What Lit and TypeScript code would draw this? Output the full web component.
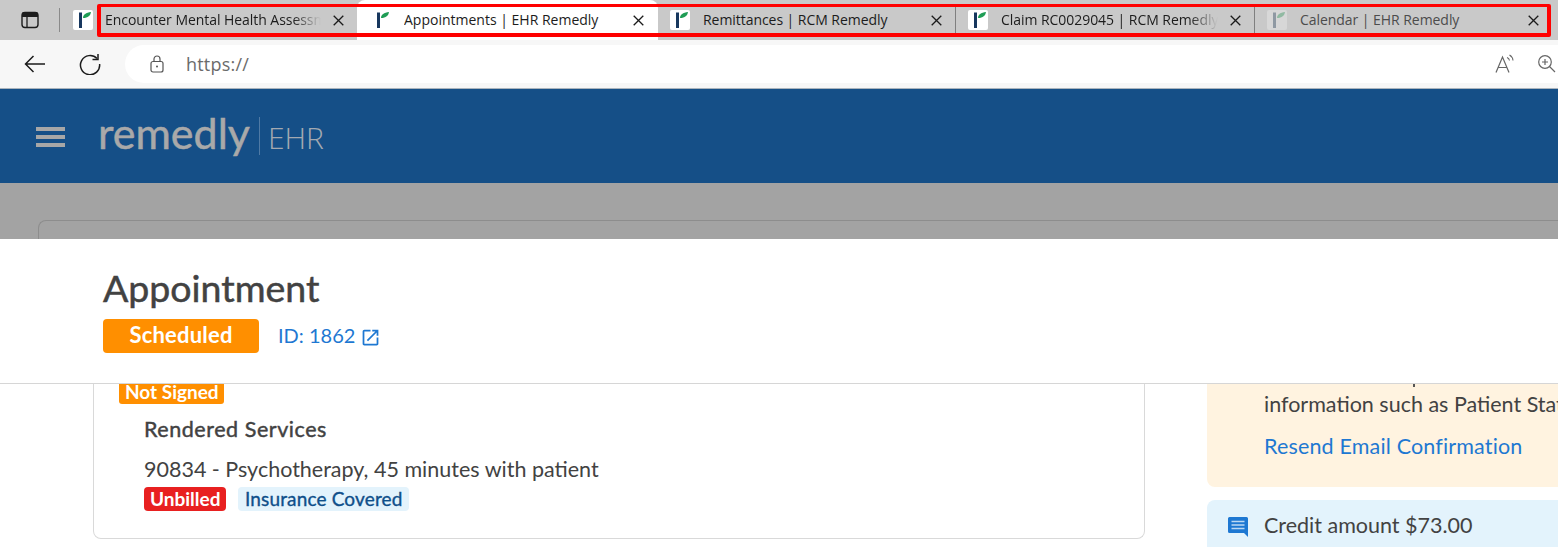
import { LitElement, html, css, svg } from "lit";
import { customElement } from "lit/decorators.js";

const fav = (dim = false) => html`<span class="fav ${dim ? "dim" : ""}"><svg width="20" height="20" viewBox="0 0 20 20">
  <rect x="6" y="2.5" width="3" height="15.5" fill="#17375e"/>
  <path d="M10 8C10 4.5 13 2.6 18 2C17.5 5.5 15 8 10 8Z" fill="#1f9d55"/>
</svg></span>`;

const closeIcon = svg`<path d="M.7 .7L10.3 10.3M10.3 .7L.7 10.3" stroke="#1a1a1a" stroke-width="1.3" fill="none"/>`;

interface Tab { title: string; active?: boolean; dim?: boolean; fade?: boolean; width: number; sep?: boolean }

const tabs: Tab[] = [
  { title: "Encounter Mental Health Assessment", fade: true, width: 252 },
  { title: "Appointments | EHR Remedly", active: true, width: 301 },
  { title: "Remittances | RCM Remedly", width: 298, sep: true },
  { title: "Claim RC0029045 | RCM Remedly", fade: true, width: 299, sep: true },
  { title: "Calendar | EHR Remedly", dim: true, width: 297 },
];

@customElement("app-root")
export class AppRoot extends LitElement {
  static styles = css`
    :host { display: block; width: 1558px; height: 547px; overflow: hidden; position: relative; background: #fff; font-family: "Lato", "Open Sans", sans-serif; color: #424242; }
    .strip { height: 40px; background: #c9c9c9; display: flex; align-items: center; box-sizing: border-box; font-family: "Open Sans", sans-serif; }
    .winbtn { width: 59px; box-sizing: border-box; padding-left: 21px; display: flex; align-items: center; height: 100%; }
    .vsep { width: 1px; height: 24px; background: #8a8a8a; margin-right: 13px; }
    .fav { width: 20px; height: 20px; background: #fff; border-radius: 2px; display: inline-flex; flex: none; }
    .fav.dim { background: #dcdcdc; opacity: .75; }
    .fav.dim path { fill: #7fb596; } .fav.dim rect { fill: #7c8a97; }
    .tab0fav { margin-right: 12px; display: inline-flex; }
    .tab { height: 40px; box-sizing: border-box; display: flex; align-items: center; flex: none; position: relative; font-size: 14px; letter-spacing: -.05px; color: #1c1c1c; }
    .tab.first { background: #c9c9c9; }
    .tab.active { background: #fff; padding-left: 14px; border-radius: 8px 8px 0 0; letter-spacing: 0; }
    .tab.active .x { margin-right: 14.5px; }
    .tab.norm { padding-left: 12px; }
    .tab.sep { border-right: 1px solid #7f7f7f; height: 28px; }
    .title { flex: 1; min-width: 0; white-space: nowrap; overflow: hidden; margin: -2px 0 0 13px; }
    .first .title { margin-left: 0; }
    .fade .title { -webkit-mask-image: linear-gradient(to right, #000 86%, transparent 99%); mask-image: linear-gradient(to right, #000 86%, transparent 99%); }
    .tab.dimmed .title { color: #4c4c4c; }
    .x { flex: none; width: 11px; height: 11px; margin: 0 13px 0 10px; }
    .redbox { position: absolute; left: 97px; top: 4px; width: 1454px; height: 33px; box-sizing: border-box; border: 4px solid #f00; border-top-width: 3px; border-radius: 2px; pointer-events: none; }
    .bar { height: 48px; background: #f7f7f7; display: flex; align-items: center; padding-left: 24px; box-sizing: border-box; }
    .navicon { flex: none; display: block; }
    .reload { margin-left: 33px; }
    .pill { margin-left: 24px; flex: 1; height: 38px; background: #fff; border-radius: 19px 0 0 19px; display: flex; align-items: center; padding-left: 25px; position: relative; }
    .url { margin-left: 22px; font-family: "Open Sans", sans-serif; font-size: 18px; color: #6b6b6b; letter-spacing: .2px; }
    .tools { margin-left: auto; display: flex; align-items: center; gap: 21px; margin-right: -1px; width: 64px; overflow: hidden; flex: none; }
    .zoomicon { flex: none; margin-left: 1px; }
    .head { height: 95px; background: #154f87; border-top: 1px solid #aab4bd; box-sizing: border-box; display: flex; align-items: center; padding-left: 36px; }
    .burger { width: 29px; height: 20px; display: flex; flex-direction: column; justify-content: space-between; margin-top: 1px; }
    .burger i { display: block; height: 4px; background: #a7a7a7; }
    .logo { margin-left: 33px; font-family: "Lato", sans-serif; font-size: 43px; color: #a9a9a9; -webkit-text-stroke: .5px #a9a9a9; line-height: 1; margin-top: -7px; }
    .divider { width: 1px; height: 38px; background: #4f7aa5; margin-left: 9px; margin-right: 8px; }
    .ehr { font-family: "Open Sans", sans-serif; font-weight: 300; font-size: 30px; color: #a3a9b1; margin-top: 3px; }
    .dimband { height: 56px; background: #a3a3a3; box-sizing: border-box; padding: 37px 0 0 38px; }
    .dimcard { height: 19px; border: 1px solid #8d8d8d; border-bottom: 0; border-right: 0; border-radius: 8px 0 0 0; }
    .modal { height: 145px; box-sizing: border-box; background: #fff; border-bottom: 1px solid #d6d6d6; padding: 27px 0 0 103px; }
    h1 { margin: 0; font-size: 37.5px; line-height: 44px; font-weight: 400; -webkit-text-stroke: .5px #424242; color: #424242; }
    .mrow { display: flex; align-items: center; margin-top: 9px; }
    .status { width: 156px; height: 34px; box-sizing: border-box; padding-bottom: 4px; background: #ff8f00; color: #fff; border-radius: 4px; font-size: 22px; letter-spacing: .2px; font-weight: 700; display: flex; align-items: center; justify-content: center; }
    .idlink { margin-left: 19px; color: #1e78d2; font-size: 20px; display: flex; align-items: center; gap: 5px; padding-bottom: 2px; }
    .idlink svg { margin-top: 4px; }
    .content { height: 163px; overflow: hidden; display: grid; grid-template-columns: 1052px 351px; column-gap: 62px; padding-left: 93px; }
    .card { height: 155px; box-sizing: border-box; border: 1px solid #d9d9d9; border-top: 0; border-radius: 0 0 8px 8px; padding-left: 25px; }
    .badge { display: inline-flex; align-items: center; border-radius: 4px; color: #fff; font-weight: 700; font-size: 19px; height: 24px; padding: 0 5.5px 2px 6px; box-sizing: border-box; }
    .notsigned { background: #ff8f00; margin-top: -4px; border-radius: 0 0 3px 3px; display: flex; width: fit-content; }
    h3 { margin: 12px 0 0 25px; font-size: 21.5px; line-height: 26px; font-weight: 400; -webkit-text-stroke: .45px #424242; letter-spacing: .55px; color: #424242; }
    .svc { margin: 14px 0 0 25px; font-size: 21.5px; line-height: 26px; }
    .tags { margin: 5px 0 0 25px; display: flex; gap: 12px; }
    .unb { background: #e82020; }
    .cov { background: #e3f3fc; color: #0f4f8a; font-weight: 400; -webkit-text-stroke: .35px #0f4f8a; letter-spacing: .15px; padding: 0 6px 2px 7px; }
    .side { display: flex; flex-direction: column; gap: 13px; min-width: 0; }
    .warn { height: 103px; box-sizing: border-box; background: #fff3e0; border-radius: 0 0 0 8px; padding: 0 0 0 57px; font-size: 21.5px; line-height: 26px; white-space: nowrap; overflow: hidden; }
    .tail { display: block; width: 2px; height: 3px; background: #555; margin: 0 0 4px 149px; }
    .warn a { display: block; margin-top: 16px; color: #1e78d2; letter-spacing: .16px; }
    .credit { height: 60px; box-sizing: border-box; background: #e3f3fc; border-radius: 8px 0 0 0; display: flex; align-items: flex-start; padding: 13px 0 0 20px; font-size: 21.5px; line-height: 24px; gap: 15px; }
    .credit svg { margin-top: 3px; flex: none; }
  `;

  private renderTab(t: Tab, i: number) {
    const cls = ["tab", i === 0 ? "first" : t.active ? "active" : "norm", t.sep ? "sep" : "", t.fade ? "fade" : "", t.dim ? "dimmed" : ""].join(" ");
    return html`<div class=${cls} style="width:${t.width}px">
      ${i === 0 ? "" : fav(t.dim)}
      <span class="title">${t.title}</span>
      <svg class="x" viewBox="0 0 11 11">${closeIcon}</svg>
    </div>`;
  }

  render() {
    return html`
      <div class="strip">
        <div class="winbtn">
          <svg width="18" height="18" viewBox="0 0 18 18"><rect x="1" y="1.5" width="16" height="15" rx="3" fill="none" stroke="#1c1c1c" stroke-width="1.4"/><path d="M1 2.5a1.5 1.5 0 0 1 1.5-1.5h13a1.5 1.5 0 0 1 1.5 1.5V6H1Z" fill="#1c1c1c"/><path d="M6 6v10" stroke="#1c1c1c" stroke-width="1.3"/></svg>
        </div>
        <div class="vsep"></div>
        <span class="tab0fav">${fav()}</span>
        ${tabs.map((t, i) => this.renderTab(t, i))}
      </div>
      <div class="bar">
        <svg class="navicon" width="22" height="18" viewBox="0 0 22 18"><path d="M21 9H1.5M9.5 1L1.5 9L9.5 17" stroke="#1c1c1c" stroke-width="1.5" fill="none"/></svg>
        <svg class="navicon reload" width="22" height="22" viewBox="0 0 22 22"><path d="M18 5.5A9.6 9.6 0 1 0 20.6 11" stroke="#1c1c1c" stroke-width="1.5" fill="none"/><path d="M19 1V6.5H13.5" stroke="#1c1c1c" stroke-width="1.5" fill="none"/></svg>
        <div class="pill">
          <svg width="14" height="18" viewBox="0 0 14 18"><rect x="1" y="6.5" width="12" height="10.5" rx="2" fill="none" stroke="#555" stroke-width="1.2"/><path d="M4 6.5V4a3 3 0 0 1 6 0v2.5" fill="none" stroke="#555" stroke-width="1.2"/><circle cx="7" cy="11.5" r="1" fill="#555"/></svg>
          <span class="url">https://</span>
          <div class="tools">
            <svg width="20" height="20" viewBox="0 0 20 20"><path d="M1 18.5L7.5 3L14 18.5M3.2 13.5H11.8" stroke="#666" stroke-width="1.2" fill="none"/><path d="M12 3.5a4 4 0 0 1 2.5 3M14.5 1a7 7 0 0 1 3.5 5.5" stroke="#666" stroke-width="1.1" fill="none"/></svg>
            <svg class="zoomicon" width="20" height="20" viewBox="0 0 20 20"><circle cx="8" cy="8" r="6.3" stroke="#666" stroke-width="1.2" fill="none"/><path d="M5 8H11M8 5V11M12.5 12.5L18 18" stroke="#666" stroke-width="1.2" fill="none"/></svg>
          </div>
        </div>
      </div>
      <div class="head">
        <div class="burger"><i></i><i></i><i></i></div>
        <span class="logo">remedly</span>
        <span class="divider"></span>
        <span class="ehr">EHR</span>
      </div>
      <div class="dimband"><div class="dimcard"></div></div>
      <div class="modal">
        <h1>Appointment</h1>
        <div class="mrow">
          <div class="status">Scheduled</div>
          <div class="idlink">ID: 1862
            <svg width="21" height="21" viewBox="0 0 24 24"><path fill="#1e78d2" d="M19 19H5V5h7V3H5c-1.11 0-2 .9-2 2v14c0 1.1.89 2 2 2h14c1.1 0 2-.9 2-2v-7h-2v7zM14 3v2h3.59l-9.83 9.83 1.41 1.41L19 6.41V10h2V3h-7z"/></svg>
          </div>
        </div>
      </div>
      <div class="content">
        <div class="card">
          <div class="badge notsigned">Not Signed</div>
          <h3>Rendered Services</h3>
          <div class="svc">90834 - Psychotherapy, 45 minutes with patient</div>
          <div class="tags"><span class="badge unb">Unbilled</span><span class="badge cov">Insurance Covered</span></div>
        </div>
        <div class="side">
          <div class="warn"><span class="tail"></span>information such as Patient Status<a>Resend Email Confirmation</a></div>
          <div class="credit">
            <svg width="22" height="22" viewBox="0 0 22 22"><path d="M2.5 1H19.5A1.5 1.5 0 0 1 21 2.5V21L17 17H2.5A1.5 1.5 0 0 1 1 15.5V2.5A1.5 1.5 0 0 1 2.5 1Z" fill="#1e78d2"/><path d="M4.5 5.5H17.5M4.5 9H17.5M4.5 12.5H17.5" stroke="#bcd8f3" stroke-width="1.6"/></svg>
            <span>Credit amount $73.00</span>
          </div>
        </div>
      </div>
      <div class="redbox"></div>
    `;
  }
}
